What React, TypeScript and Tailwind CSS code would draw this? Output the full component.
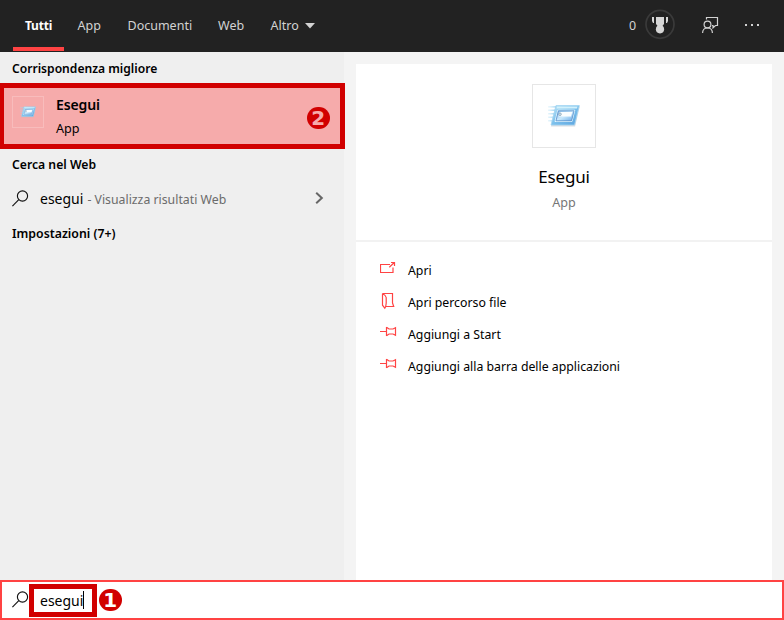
import type { ReactNode } from 'react';

const tabs = [
  { label: 'App', cls: 'w-[50px]' },
  { label: 'Documenti', cls: 'w-[90.5px]' },
  { label: 'Web', cls: 'w-[52.5px]' },
  { label: 'Altro', cls: 'w-[34.5px]' },
];

function SearchIcon() {
  return (
    <svg className="h-[18px] w-[18px] shrink-0" viewBox="0 0 18 18" fill="none" stroke="#111" strokeWidth="1.15">
      <circle cx="10.5" cy="6" r="5.1" />
      <path d="M6.8 9.7.4 16.1" />
    </svg>
  );
}

function RunIcon({ className }: { className: string }) {
  return (
    <svg className={className} viewBox="0 0 32 24" fill="none">
      <defs>
        <linearGradient id="frame" x1="0" y1="0" x2="1" y2="1">
          <stop offset="0" stopColor="#b9e4f7" />
          <stop offset=".5" stopColor="#7cc0ec" />
          <stop offset="1" stopColor="#5aa2de" />
        </linearGradient>
        <linearGradient id="inner" x1="0" y1="0" x2="1" y2="1">
          <stop offset="0" stopColor="#7fb6e8" />
          <stop offset=".5" stopColor="#c9e9fd" />
          <stop offset="1" stopColor="#5da0e2" />
        </linearGradient>
        <linearGradient id="trail" gradientUnits="userSpaceOnUse" x1="0" y1="0" x2="9" y2="0">
          <stop offset="0" stopColor="#a9dcf4" stopOpacity=".25" />
          <stop offset="1" stopColor="#86c8ee" />
        </linearGradient>
      </defs>
      <path d="M0 2.2h10v1.4H0zM0 5.4h9v1.6H0zM0 9h8v1.6H0zM0 12.5h7v1.6H0zM0 16h6v1.6H0z" fill="url(#trail)" />
      <path d="M7.5 2.5h24.3l-4.7 20H3z" fill="#b4bcc4" opacity=".5" />
      <path d="M8 1.5h23.3l-4.8 19.5H3z" fill="url(#frame)" stroke="#a5d6f2" strokeWidth=".8" />
      <path d="M9 2.5h20.6l-.6 2H8.5z" fill="#d2f1fc" />
      <path d="M9.8 6.2h17L24 17.5H7z" fill="url(#inner)" stroke="#e1f6ff" strokeWidth="1" />
      <path d="M10.4 6.8h15.6l-2.4 10H8z" stroke="#5b8fc9" strokeWidth=".8" />
      <path d="M11.6 8h12.6l-1.2 4.6H10.6z" fill="#fafdff" />
      <circle cx="12" cy="10.2" r="1.3" fill="#dcecf4" stroke="#7594ae" strokeWidth=".7" />
    </svg>
  );
}

function OpenIcon() {
  return (
    <svg className="h-5 w-5" viewBox="0 1 20 20" fill="none" stroke="#ff4343" strokeWidth="1.2">
      <path d="M10 5.5H.5v8H13V8.5M9.300 8.200l5-4.700M11 3.500h3.500V7" />
    </svg>
  );
}

function FolderIcon() {
  return (
    <svg className="h-5 w-5" viewBox="0 1 20 20" fill="none" stroke="#ff4343" strokeWidth="1.2">
      <path d="M2.500 2.500h10v9.500l1.200 3.500H5.700M2.500 2.500v11.700l2.300 3 .9-1.700.5-3.500V6.500Q6 4.500 2.500 2.500" />
    </svg>
  );
}

function PinIcon() {
  return (
    <svg className="h-5 w-5" viewBox="0 0 20 20" fill="none" stroke="#ff4343" strokeWidth="1.2">
      <path d="M0 7.500h6.500M6.500 3v9M6.500 3.200 9 5h4l2.500-1.300v7.600L13 10H9l-2.500 1.800" />
    </svg>
  );
}

function Badge({ n, digit, className = '' }: { n: string; digit: string; className?: string }) {
  return (
    <span
      className={`flex h-[22.5px] w-[22.5px] shrink-0 items-center justify-center rounded-full bg-[#d10000] font-['DejaVu_Sans'] text-[20px] leading-none font-bold ${digit} ${className}`}
    >
      {n}
    </span>
  );
}

function Action({ icon, children }: { icon: ReactNode; children: ReactNode }) {
  return (
    <div className="flex h-8 items-center">
      <span className="-mt-[3px] mr-2 w-5">{icon}</span>
      <span className="text-[12.3px] tracking-[-0.01px]">{children}</span>
    </div>
  );
}

export default function App() {
  return (
    <div className="flex h-[620px] w-[784px] flex-col overflow-hidden bg-[#f4f4f4] font-['Noto_Sans','Open_Sans',sans-serif] text-black">
      <header className="flex h-[52px] shrink-0 bg-[#222222] text-[12.5px] text-[#d2d2d2]">
        <div className="ml-[13px] flex h-[51px] w-[51px] flex-col items-center border-b-4 border-[#ff4343] text-[12px] leading-[51px] font-bold text-white">
          <span className="h-[47px] tracking-[-0.2px]">Tutti</span>
        </div>
        <nav className="ml-[13.5px] flex leading-[51px]">
          {tabs.map((t) => (
            <span key={t.label} className={t.cls}>{t.label}</span>
          ))}
          <svg className="mt-[23px] h-[6px] w-[10px]" viewBox="0 0 10 6">
            <path d="M0 0h10L5 5.500z" fill="#d2d2d2" />
          </svg>
        </nav>
        <span className="ml-auto w-4 leading-[51px]">0</span>
        <svg className="mt-[9px] h-[31px] w-[30px]" viewBox="0 0 30 31">
          <circle cx="15" cy="15.300" r="14" fill="none" stroke="#3a3a3a" strokeWidth="1.7" />
          <path d="M11 8h8v7l-2 2.500h-4L11 15zM7 8h2v6H8l-1-2zM21 8h2v4l-1 2h-1z" fill="#d6d6d6" />
          <circle cx="15" cy="20.300" r="4.100" fill="#d6d6d6" />
        </svg>
        <svg className="mt-4 ml-[26px] h-[18px] w-[18px]" viewBox="0 0 18 18" fill="none" stroke="#d2d2d2" strokeWidth="1.2">
          <circle cx="6.500" cy="8.500" r="3.400" />
          <path d="M1.600 17c0-3 2-5 4.900-5s4.900 2 4.900 5M5.500 3.500v-2h11v8h-2l-2.500 2.300V9.500h-1" />
        </svg>
        <svg className="mt-6 mr-[24px] ml-[26px] h-[2px] w-[15px]" viewBox="0 0 15 2">
          <path d="M0 0h2v2H0zM6 0h2v2H6zM12 0h2v2h-2z" fill="#d2d2d2" />
        </svg>
      </header>

      <div className="flex h-[528px] shrink-0">
        <aside className="w-[344px] shrink-0 bg-[#efefef]">
          <h2 className="h-[31px] pl-3 text-[12.1px] leading-[33px] font-semibold">Corrispondenza migliore</h2>
          <div className="flex h-[66px] w-[345px] border-[5px] border-l-4 border-[#d10000] bg-[#f6abab] pr-[10.5px]">
            <div className="mt-2 ml-2 flex h-8 w-8 items-center justify-center border border-[#f8bcbc]">
              <RunIcon className="h-[12px] w-[16px]" />
            </div>
            <div className="ml-3 flex flex-col">
              <span className="mt-[5px] text-[14px] leading-6 font-semibold tracking-[-0.1px]">Esegui</span>
              <span className="text-[12.6px] leading-6">App</span>
            </div>
            <Badge n="2" digit="text-[#f6abab]" className="mt-[18.5px] ml-auto" />
          </div>
          <h2 className="h-8 pl-3 text-[12.2px] leading-[31px] font-semibold">Cerca nel Web</h2>
          <div className="flex h-[35px] items-center pr-5 pl-3">
            <SearchIcon />
            <span className="ml-[10px] text-[14px]">esegui</span>
            <span className="mt-[3px] ml-[4px] text-[12.3px] text-[#6b6b6b]">- Visualizza risultati Web</span>
            <svg className="mb-[2px] ml-auto h-3 w-[9px]" viewBox="0 0 9 12" fill="none" stroke="#666" strokeWidth="2">
              <path d="M1.200.8 6.800 6l-5.600 5.200" />
            </svg>
          </div>
          <h2 className="pl-3 text-[12.3px] leading-[35px] font-semibold">Impostazioni (7+)</h2>
        </aside>

        <main className="mt-3 ml-3 w-[416px] bg-white">
          <section className="flex h-[178px] flex-col items-center border-b-2 border-[#f2f2f2]">
            <div className="mt-5 flex h-16 w-16 shrink-0 items-center justify-center border border-[#e6e6e6]">
              <RunIcon className="h-6 w-8" />
            </div>
            <span className="mt-[14px] text-[17px] leading-[30px] tracking-[-0.2px]">Esegui</span>
            <span className="mt-[1px] text-[12.6px] leading-5 text-[#767676]">App</span>
          </section>
          <section className="pt-[13px] pl-6">
            <Action icon={<OpenIcon />}>Apri</Action>
            <Action icon={<FolderIcon />}>Apri percorso file</Action>
            <Action icon={<PinIcon />}>Aggiungi a Start</Action>
            <Action icon={<PinIcon />}>Aggiungi alla barra delle applicazioni</Action>
          </section>
        </main>
      </div>

      <footer className="flex h-10 shrink-0 items-center border-2 border-[#ff4343] bg-white pl-[10px]">
        <SearchIcon />
        <div className="-ml-[1px] flex h-[33px] w-[68px] items-center border-[5px] border-[#d10000] pl-[6px] text-[14px]">
          esegui
          <span className="h-[18px] w-px shrink-0 bg-black" />
        </div>
        <Badge n="1" digit="text-white" className="ml-[2px]" />
      </footer>
    </div>
  );
}
